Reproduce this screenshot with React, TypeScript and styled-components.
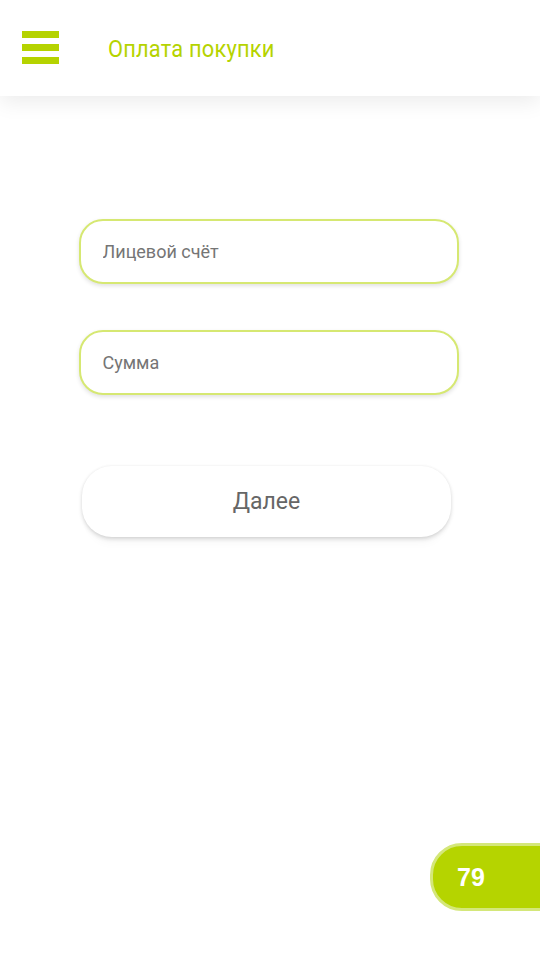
import React from 'react';
import styled, { createGlobalStyle } from 'styled-components';

const GlobalStyle = createGlobalStyle`
  html, body {
    margin: 0;
    padding: 0;
    background: #ffffff;
    font-family: Roboto, "Noto Sans", sans-serif;
  }
`;

const Page = styled.div`
  width: 540px;
  height: 960px;
  position: relative;
  overflow: hidden;
  background: #ffffff;
`;

const Header = styled.header`
  height: 96px;
  display: flex;
  align-items: center;
  padding-left: 22px;
  gap: 49px;
  background: #ffffff;
  position: relative;
  z-index: 1;
  box-shadow: 0 6px 20px rgba(0, 0, 0, 0.08);
`;

const Burger = styled.div`
  display: flex;
  flex-direction: column;
  gap: 6px;
  margin-top: -2px;
`;

const BurgerBar = styled.span`
  display: block;
  width: 37px;
  height: 7px;
  background: #b5d300;
`;

const Title = styled.h1`
  margin: 0;
  margin-top: 2px;
  font-family: Roboto, sans-serif;
  font-weight: 400;
  font-size: 23px;
  color: #b5d300;
  transform: scaleX(0.95);
  transform-origin: left center;
  letter-spacing: 0.2px;
`;

const Form = styled.form`
  display: flex;
  flex-direction: column;
  align-items: center;
  padding-top: 123px;
`;

const Field = styled.input`
  box-sizing: border-box;
  width: 380px;
  height: 65px;
  margin-right: 3px;
  margin-bottom: 46px;
  padding: 0 22px;
  border: 2px solid #d6e872;
  border-radius: 24px;
  background: #ffffff;
  box-shadow: 0 2px 4px rgba(0, 0, 0, 0.12);
  font-family: Roboto, sans-serif;
  font-size: 18px;
  color: #444;
  outline: none;

  &::placeholder {
    color: #757575;
  }
`;

const NextButton = styled.button`
  box-sizing: border-box;
  width: 369px;
  height: 71px;
  margin-top: 25px;
  margin-right: 7px;
  border: none;
  border-radius: 30px;
  background: #ffffff;
  box-shadow: 0 2px 4px rgba(0, 0, 0, 0.14), 0 0 3px rgba(0, 0, 0, 0.05),
    0 12px 10px -6px rgba(0, 0, 0, 0.03);
  font-family: Roboto, sans-serif;
  font-size: 23px;
  color: #666666;
  cursor: pointer;
`;

const Badge = styled.div`
  position: absolute;
  right: -30px;
  top: 843px;
  box-sizing: border-box;
  width: 140px;
  height: 68px;
  display: flex;
  align-items: center;
  padding-left: 24px;
  border: 3px solid #d4e77a;
  border-radius: 32px;
  background: #b5d400;
  font-family: "Liberation Sans", Arial, sans-serif;
  font-weight: 700;
  font-size: 25px;
  color: #ffffff;
`;

export default function App() {
  return (
    <Page>
      <GlobalStyle />
      <Header>
        <Burger>
          <BurgerBar />
          <BurgerBar />
          <BurgerBar />
        </Burger>
        <Title>Оплата покупки</Title>
      </Header>
      <Form onSubmit={(e) => e.preventDefault()}>
        <Field type="text" placeholder="Лицевой счёт" />
        <Field type="text" placeholder="Сумма" />
        <NextButton type="submit">Далее</NextButton>
      </Form>
      <Badge>79</Badge>
    </Page>
  );
}
